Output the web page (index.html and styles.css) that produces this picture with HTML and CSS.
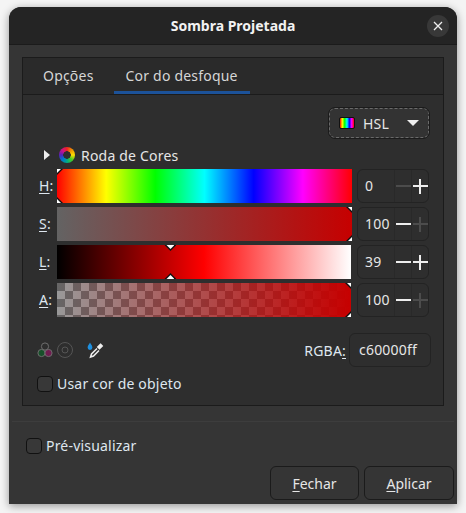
FILE: index.html
```html
<!DOCTYPE html>
<html lang="en">
<head>
  <meta charset="UTF-8" />
  <title>Sombra Projetada</title>
  <link rel="stylesheet" href="styles.css">
</head>
<body>
  <div class="window">
    <header class="titlebar">
      <span class="title">Sombra Projetada</span>
      <button class="close" type="button">
        <svg width="10" height="10" viewBox="0 0 10 10"><path d="M1 1l8 8M9 1l-8 8" stroke="#eee" stroke-width="1.3"/></svg>
      </button>
    </header>

    <div class="dialog">
      <section class="notebook">
        <nav class="tabs">
          <span class="tab">Opções</span>
          <span class="tab active">Cor do desfoque</span>
        </nav>

        <div class="page">
          <div class="mode-row">
            <div class="mode-select">
              <span class="mode-swatch"></span>
              <span class="mode-name">HSL</span>
              <span class="mode-arrow"></span>
            </div>
          </div>

          <div class="wheel-row">
            <span class="expander"></span>
            <span class="wheel"></span>
            <span>Roda de Cores</span>
          </div>

          <div class="sliders">
            <label class="slider-label"><u>H</u>:</label>
            <div class="bar bar-h">
              <i class="mark top" style="left:0%"></i>
              <i class="mark bottom" style="left:0%"></i>
            </div>
            <div class="spin">
              <span class="spin-value">0</span>
              <span class="spin-btn off"><b class="minus"></b></span>
              <span class="spin-btn"><b class="plus"></b></span>
            </div>

            <label class="slider-label"><u>S</u>:</label>
            <div class="bar bar-s">
              <i class="mark top" style="left:100%"></i>
              <i class="mark bottom" style="left:100%"></i>
            </div>
            <div class="spin">
              <span class="spin-value">100</span>
              <span class="spin-btn"><b class="minus"></b></span>
              <span class="spin-btn off"><b class="plus"></b></span>
            </div>

            <label class="slider-label"><u>L</u>:</label>
            <div class="bar bar-l">
              <i class="mark top" style="left:38.6%"></i>
              <i class="mark bottom" style="left:38.6%"></i>
            </div>
            <div class="spin">
              <span class="spin-value">39</span>
              <span class="spin-btn"><b class="minus"></b></span>
              <span class="spin-btn"><b class="plus"></b></span>
            </div>

            <label class="slider-label"><u>A</u>:</label>
            <div class="bar bar-a">
              <i class="mark top" style="left:100%"></i>
              <i class="mark bottom" style="left:100%"></i>
            </div>
            <div class="spin">
              <span class="spin-value">100</span>
              <span class="spin-btn"><b class="minus"></b></span>
              <span class="spin-btn off"><b class="plus"></b></span>
            </div>
          </div>

          <div class="tools-row">
            <svg class="tool tool-mix" width="18" height="18" viewBox="0 0 18 18">
              <circle cx="9" cy="5.5" r="3.6" fill="none" stroke="#6e6e6e" stroke-width="1"/>
              <circle cx="5.5" cy="12" r="3.6" fill="#17502a" stroke="#6e6e6e" stroke-width="1"/>
              <circle cx="12.5" cy="12" r="3.6" fill="#6f1c50" stroke="#6e6e6e" stroke-width="1"/>
            </svg>
            <svg class="tool" width="18" height="18" viewBox="0 0 18 18">
              <circle cx="9" cy="9" r="7.5" fill="none" stroke="#555" stroke-width="1"/>
              <circle cx="9" cy="9" r="3" fill="none" stroke="#555" stroke-width="1"/>
            </svg>
            <svg class="tool dropper" width="18" height="18" viewBox="0 0 18 18">
              <path d="M4 1.5C5 3.5 6.4 4.8 6.4 6.6A2.4 2.4 0 0 1 1.6 6.6C1.6 4.8 3 3.5 4 1.5Z" fill="#1e90e0"/>
              <path d="M14.5 3.5l1.5 1.5-2.5 2.5L12 6Z" fill="#eee" stroke="#eee" stroke-width="1.8"/>
              <path d="M11 7.5L5.5 13 4.5 16 7.5 15 13 9.5" fill="#333" stroke="#eee" stroke-width="1.5"/>
            </svg>
            <label class="rgba-label">RGBA<u>:</u></label>
            <div class="rgba-input">c60000ff</div>
          </div>

          <div class="check-row">
            <span class="checkbox"></span>
            <span>Usar cor de objeto</span>
          </div>
        </div>
      </section>

      <hr class="separator">

      <div class="check-row preview-row">
        <span class="checkbox"></span>
        <span>Pré-visualizar</span>
      </div>

      <footer class="actions">
        <button class="btn btn-close" type="button"><u>F</u>echar</button>
        <button class="btn btn-apply" type="button"><u>A</u>plicar</button>
      </footer>
    </div>
  </div>
</body>
</html>
```

FILE: styles.css
```css
* {
  box-sizing: border-box;
}

html, body {
  margin: 0;
  height: 513px;
  overflow: hidden;
}

body {
  background: #f4f4f4;
  padding: 7px 9px 9px;
  font-family: "Noto Sans", "Open Sans", sans-serif;
  font-size: 14px;
  letter-spacing: 0.2px;
  color: #e6e6e6;
}

u {
  text-underline-offset: 2px;
}

.window {
  height: 497px;
  display: flex;
  flex-direction: column;
  border-radius: 12px 12px 0 0;
  background: #353535;
  box-shadow: 0 2px 9px rgba(0,0,0,0.4);
  overflow: hidden;
}

.titlebar {
  height: 38px;
  flex: none;
  position: relative;
  display: flex;
  align-items: center;
  justify-content: center;
  background: #242424;
  border-bottom: 1px solid #1b1b1b;
}

.title {
  font-weight: 700;
  font-size: 14px;
  letter-spacing: 0;
  color: #f2f2f2;
}

.close {
  position: absolute;
  right: 8px;
  top: 8px;
  width: 22px;
  height: 22px;
  padding: 0;
  border: 0;
  border-radius: 50%;
  background: #383838;
  display: flex;
  align-items: center;
  justify-content: center;
}

.dialog {
  flex: 1;
  display: flex;
  flex-direction: column;
  padding: 12px 3px 4px;
}

.notebook {
  height: 349px;
  margin: 0 10px 0 10px;
  flex: none;
  display: flex;
  flex-direction: column;
  background: #2e2e2e;
  border: 1px solid #1b1b1b;
}

.tabs {
  height: 37px;
  flex: none;
  display: flex;
  background: #2a2a2a;
  border-bottom: 1px solid #1b1b1b;
}

.tab {
  padding: 0 12px;
  height: 36px;
  line-height: 35px;
  margin-left: 8px;
  white-space: nowrap;
  color: #d6d6d6;
}

.tab.active {
  width: 136px;
  margin-left: 8px;
  padding: 0 0 0 12px;
  border-bottom: 3px solid #1c5299;
}

.page {
  flex: 1;
  padding: 12px 12px 0 14px;
}

.mode-row {
  display: flex;
  justify-content: flex-end;
  padding: 1px 2px 1px 0;
}

.mode-select {
  width: 100px;
  height: 30px;
  display: flex;
  align-items: center;
  padding: 0 9px;
  background: #333;
  border: 1px dashed #6a6a6a;
  outline: 1px solid #1b1b1b;
  outline-offset: 0;
  border-radius: 6px;
}

.mode-swatch {
  flex: none;
  width: 16px;
  height: 12px;
  border-radius: 2px;
  border: 1px solid #111;
  background: linear-gradient(to right, #f00, #ff0, #0f0, #0ff, #00f, #f0f, #f00);
}

.mode-name {
  margin-left: 8px;
  flex: 1;
}

.mode-arrow {
  width: 0;
  height: 0;
  border-left: 6px solid transparent;
  border-right: 6px solid transparent;
  border-top: 6px solid #eee;
}

.wheel-row {
  height: 20px;
  margin-top: 6px;
  margin-left: 7px;
  display: flex;
  align-items: center;
  gap: 6px;
}

.expander {
  width: 0;
  height: 0;
  margin-right: 3px;
  border-top: 5px solid transparent;
  border-bottom: 5px solid transparent;
  border-left: 6px solid #eee;
}

.wheel {
  width: 16px;
  height: 16px;
  border-radius: 50%;
  background:
    radial-gradient(circle, #2e2e2e 0 3.5px, transparent 4px),
    conic-gradient(#e22, #e90, #fd0, #4c2, #0a8, #07c, #52b, #c18, #e22);
}

.sliders {
  display: grid;
  grid-template-columns: 20px 295px 72px;
  grid-auto-rows: 34px;
  column-gap: 0;
  row-gap: 4px;
  margin-top: 4px;
  align-items: stretch;
}

.slider-label {
  line-height: 34px;
  padding-left: 2px;
  color: #dfe7ef;
}

.bar {
  position: relative;
  overflow: hidden;
  margin-right: 0;
}

.bar-h {
  background: linear-gradient(to right, #f00, #ff0, #0f0, #0ff, #00f, #f0f, #f00);
}

.bar-s {
  background: linear-gradient(to right, #636363, #c60000);
}

.bar-l {
  width: 294px;
  background: linear-gradient(to right, #000, #f00 50%, #fff);
}

.bar-a {
  width: 294px;
  background:
    linear-gradient(to right, rgba(198,0,0,0), #c60000),
    repeating-conic-gradient(#999 0 25%, #666 0 50%) 0 0 / 16px 16px;
}

.mark {
  position: absolute;
  width: 12px;
  height: 6px;
  margin-left: -6px;
  background: #111;
}

.mark::after {
  content: "";
  position: absolute;
  left: 2px;
  width: 8px;
  height: 4px;
  background: #fff;
}

.mark.top {
  top: 0;
  clip-path: polygon(0 0, 100% 0, 50% 100%);
}

.mark.top::after {
  top: 0;
  clip-path: polygon(0 0, 100% 0, 50% 100%);
}

.mark.bottom {
  bottom: 0;
  clip-path: polygon(50% 0, 100% 100%, 0 100%);
}

.mark.bottom::after {
  bottom: 0;
  clip-path: polygon(50% 0, 100% 100%, 0 100%);
}

.spin {
  margin-left: 5px;
  width: 72px;
  display: flex;
  background: #2e2e2e;
  border: 1px solid #232323;
  border-radius: 6px;
}

.spin-value {
  flex: 1;
  line-height: 32px;
  padding-left: 7px;
}

.spin-btn {
  width: 17px;
  display: flex;
  align-items: center;
  justify-content: center;
  border-left: 1px solid #292929;
}

.minus, .plus {
  display: block;
  position: relative;
  width: 15px;
  height: 2px;
  background: #eee;
}

.plus::after {
  content: "";
  position: absolute;
  left: 6.5px;
  top: -6.5px;
  width: 2px;
  height: 15px;
  background: inherit;
}

.off .minus, .off .plus {
  background: #4c4c4c;
}

.tools-row {
  display: flex;
  align-items: center;
  height: 34px;
  margin-top: 16px;
  margin-left: -1px;
}

.tool {
  margin-right: 4px;
}

.tool-mix {
  margin-right: 2px;
}

.dropper {
  margin-left: 8px;
}

.rgba-label {
  margin-left: auto;
  margin-right: 3px;
  color: #dfe7ef;
}

.rgba-input {
  width: 82px;
  height: 34px;
  line-height: 32px;
  padding-left: 9px;
  border: 1px solid #232323;
  border-radius: 6px;
}

.check-row {
  display: flex;
  align-items: center;
  gap: 4px;
  margin-top: 7px;
  color: #dfe7ef;
}

.checkbox {
  width: 16px;
  height: 16px;
  background: #383838;
  border: 1px solid #111;
  border-radius: 4px;
}

.separator {
  height: 1px;
  margin: 15px 0 0;
  border: 0;
  background: #3d3d3d;
}

.preview-row {
  margin: 14px 0 0 14px;
}

.actions {
  display: flex;
  justify-content: flex-end;
  gap: 5px;
  margin-top: auto;
}

.btn {
  height: 34px;
  font: inherit;
  color: #e6e6e6;
  background: #353535;
  border: 1px solid #1b1b1b;
  border-radius: 6px;
}

.btn-close {
  width: 89px;
}

.btn-apply {
  width: 90px;
}
```
